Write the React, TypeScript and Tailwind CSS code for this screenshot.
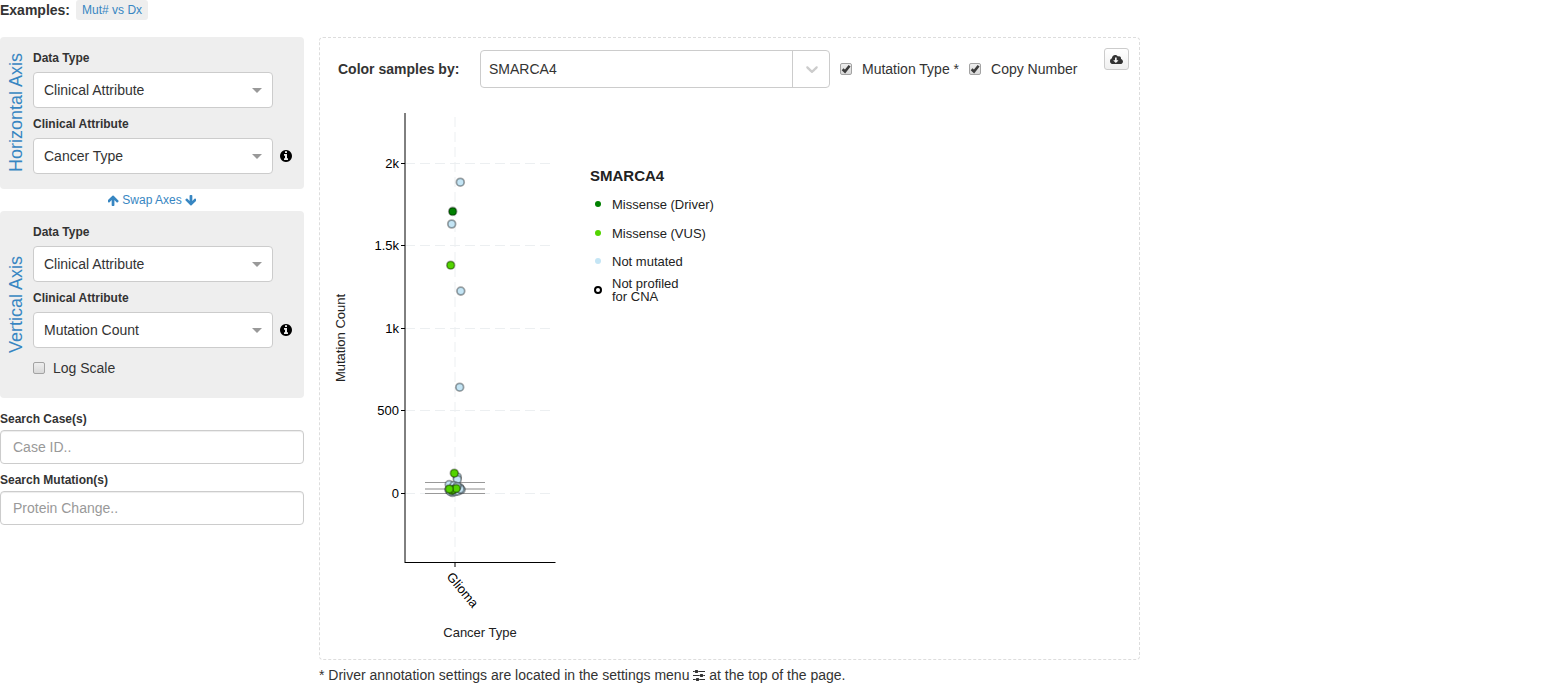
import React, { useState } from "react";
import { FaCloudDownloadAlt } from "react-icons/fa";

type Kind = "driver" | "vus" | "none";
type Point = [number, number, Kind];

const fills: Record<Kind, string> = {
  driver: "#008000",
  vus: "#53D400",
  none: "#c4e5f5",
};

const yTicks = [
  { label: "2k", y: 65 },
  { label: "1.5k", y: 147 },
  { label: "1k", y: 230 },
  { label: "500", y: 312 },
  { label: "0", y: 395 },
];

const points: Point[] = [
  [130.3, 84.2, "none"],
  [121.7, 126, "none"],
  [130.8, 193.1, "none"],
  [129.7, 289.2, "none"],
  [127.3, 379, "none"],
  [127.3, 381.5, "none"],
  [119.2, 386.6, "none"],
  [122.5, 394.5, "none"],
  [119, 392, "none"],
  [120.5, 393.5, "none"],
  [125.5, 393.5, "none"],
  [128, 393, "none"],
  [124, 387.5, "none"],
  [131.2, 391.6, "none"],
  [129.5, 389.5, "none"],
  [130, 391, "none"],
  [127, 388.5, "none"],
  [122.7, 113.4, "driver"],
  [120.7, 167.2, "vus"],
  [124.3, 375.2, "vus"],
  [121.7, 392.5, "vus"],
  [123.5, 391.5, "vus"],
  [126.3, 390.4, "vus"],
  [119.3, 391, "vus"],
];

const legend: { lines: string[]; y: number; kind?: Kind }[] = [
  { lines: ["Missense (Driver)"], y: 106, kind: "driver" },
  { lines: ["Missense (VUS)"], y: 135, kind: "vus" },
  { lines: ["Not mutated"], y: 163, kind: "none" },
  { lines: ["Not profiled", "for CNA"], y: 192 },
];

function ArrowIcon({ down = false }: { down?: boolean }) {
  return (
    <svg viewBox="128 128 1536 1536" className={down ? "size-[11px] rotate-180" : "size-[11px]"} fill="currentColor" aria-hidden="true">
      <path d="M1611 971q0 51-37 90l-75 75q-38 38-91 38-54 0-90-38l-294-293v704q0 52-37.5 84.5t-90.5 32.5h-128q-53 0-90.5-32.5t-37.5-84.5v-704l-294 293q-36 38-90 38t-90-38l-75-75q-38-38-38-90 0-53 38-91l651-651q35-37 90-37 54 0 91 37l651 651q37 39 37 91z" />
    </svg>
  );
}

function InfoIcon() {
  return (
    <svg viewBox="128 128 1536 1536" className="size-3" fill="#000000" aria-hidden="true">
      <path d="M1152 1376v-160q0-14-9-23t-23-9h-96v-512q0-14-9-23t-23-9h-320q-14 0-23 9t-9 23v160q0 14 9 23t23 9h96v320h-96q-14 0-23 9t-9 23v160q0 14 9 23t23 9h448q14 0 23-9t9-23zm-128-896v-160q0-14-9-23t-23-9h-192q-14 0-23 9t-9 23v160q0 14 9 23t23 9h192q14 0 23-9t9-23zm640 416q0 209-103 385.5t-279.5 279.5-385.5 103-385.5-103-279.5-279.5-103-385.5 103-385.5 279.5-279.5 385.5-103 385.5 103 279.5 279.5 103 385.5z" />
    </svg>
  );
}

function SlidersIcon() {
  return (
    <svg viewBox="128 128 1536 1536" className="inline-block size-3 align-[-1px]" fill="currentColor" aria-hidden="true">
      <path d="M480 1408v128h-352v-128h352zm352-128q26 0 45 19t19 45v256q0 26-19 45t-45 19h-256q-26 0-45-19t-19-45v-256q0-26 19-45t45-19h256zm160-384v128h-864v-128h864zm-640-512v128h-224v-128h224zm1312 1024v128h-736v-128h736zm-960-1152q26 0 45 19t19 45v256q0 26-19 45t-45 19h-256q-26 0-45-19t-19-45v-256q0-26 19-45t45-19h256zm640 512q26 0 45 19t19 45v256q0 26-19 45t-45 19h-256q-26 0-45-19t-19-45v-256q0-26 19-45t45-19h256zm320 128v128h-224v-128h224zm0-512v128h-864v-128h864z" />
    </svg>
  );
}

function Checkbox({ id, label, gap, defaultChecked = false }: { id: string; label: string; gap: string; defaultChecked?: boolean }) {
  const [checked, setChecked] = useState(defaultChecked);
  return (
    <div className={"flex items-center " + gap}>
      <span className="grid shrink-0">
        <input
          id={id}
          type="checkbox"
          checked={checked}
          onChange={(e) => setChecked(e.target.checked)}
          className="col-start-1 row-start-1 size-3 appearance-none rounded-xs border border-[#a3a3a3] bg-linear-to-b from-[#eeeeee] to-[#d9d9d9]"
        />
        {checked && (
          <svg viewBox="0 0 12 12" className="pointer-events-none col-start-1 row-start-1 size-3" aria-hidden="true">
            <path d="M2.6 6.2 5 8.5 9.6 2.8" fill="none" stroke="#3c3c3c" strokeWidth="2.6" />
          </svg>
        )}
      </span>
      <label htmlFor={id}>{label}</label>
    </div>
  );
}

function AxisSelect({ id, label, value, options, info }: { id: string; label: string; value: string; options: string[]; info?: boolean }) {
  return (
    <div>
      <label htmlFor={id} className="mb-[5px] block text-xs leading-[18px] font-bold">
        {label}
      </label>
      <div className="flex items-center gap-[7px]">
        <div className="grid w-60 items-center">
          <select
            id={id}
            defaultValue={value}
            className="col-start-1 row-start-1 h-9 w-full appearance-none rounded border border-[#cccccc] bg-white pr-8 pl-[10px]"
          >
            {options.map((o) => (
              <option key={o}>{o}</option>
            ))}
          </select>
          <svg viewBox="0 0 10 5" className="pointer-events-none col-start-1 row-start-1 mr-[11px] h-[5px] w-[10px] justify-self-end" aria-hidden="true">
            <path d="M0 0h10L5 5z" fill="#999999" />
          </svg>
        </div>
        {info && <InfoIcon />}
      </div>
    </div>
  );
}

function AxisPanel({ title, children }: { title: string; children: React.ReactNode }) {
  return (
    <section className="flex rounded bg-[#eeeeee]">
      <div className="flex w-[33px] items-center justify-center pr-[2px]">
        <h2 className="rotate-180 text-lg leading-5 whitespace-nowrap text-[#3786c2] [writing-mode:vertical-rl]">{title}</h2>
      </div>
      <div className="flex flex-col gap-[7px] pt-3 pb-[15px]">{children}</div>
    </section>
  );
}

function SearchField({ id, label, placeholder }: { id: string; label: string; placeholder: string }) {
  return (
    <div>
      <label htmlFor={id} className="mb-[2px] block text-xs leading-[18px] font-bold">
        {label}
      </label>
      <input
        id={id}
        type="text"
        placeholder={placeholder}
        className="h-[34px] w-full rounded border border-[#cccccc] bg-white px-3 shadow-[inset_0_1px_1px_rgba(0,0,0,0.075)] placeholder:text-[#999999]"
      />
    </div>
  );
}

function ScatterPlot() {
  return (
    <svg
      width="480"
      height="550"
      viewBox="0 0 480 550"
      className="mt-[10px] ml-[10px] block"
      fontFamily='"Liberation Sans", Arial, sans-serif'
      fontSize="13"
      role="img"
      aria-label="Mutation Count by Cancer Type"
    >
      <g stroke="#eceff1" strokeDasharray="10 5">
        {yTicks.map((t) => (
          <line key={t.label} x1="75" x2="225" y1={t.y + 0.5} y2={t.y + 0.5} />
        ))}
        <line x1="125" x2="125" y1="464" y2="14" />
      </g>
      <g stroke="#000000">
        <line x1="75" x2="75" y1="15" y2="465" />
        <line x1="75" x2="225.5" y1="464.5" y2="464.5" />
        <line x1="125" x2="125" y1="465" y2="469" />
        {yTicks.map((t) => (
          <line key={t.label} x1="71" x2="75" y1={t.y + 0.5} y2={t.y + 0.5} />
        ))}
      </g>
      <g textAnchor="end">
        {yTicks.map((t) => (
          <text key={t.label} x="69" y={t.y + 5}>
            {t.label}
          </text>
        ))}
      </g>
      <text transform="translate(116 479) rotate(50)">Glioma</text>
      <g fill="#222222" textAnchor="middle">
        <text x="150" y="539">Cancer Type</text>
        <text transform="translate(15 240) rotate(-90)">Mutation Count</text>
      </g>
      <g>
        <rect x="95" y="384" width="60" height="1" fill="#999999" />
        <rect x="95" y="390" width="60" height="2" fill="#c4c4c4" />
        <rect x="95" y="395" width="60" height="1" fill="#999999" />
      </g>
      <g stroke="#000000" strokeOpacity="0.35" strokeWidth="1.8">
        {points.map(([x, y, kind], i) => (
          <circle key={i} cx={x} cy={y} r="3.9" fill={fills[kind]} />
        ))}
      </g>
      <g fill="#222222">
        <text x="260" y="83" fontSize="15" fontWeight="bold">
          SMARCA4
        </text>
        {legend.map((item) => (
          <g key={item.lines[0]}>
            <circle
              cx="268"
              cy={item.y}
              r="3"
              fill={item.kind ? fills[item.kind] : "#ffffff"}
              stroke={item.kind ? "none" : "#000000"}
              strokeWidth="2"
            />
            {item.lines.map((line, i) => (
              <text key={line} x="282" y={item.y + (item.lines.length > 1 ? -2 : 5) + i * 13}>
                {line}
              </text>
            ))}
          </g>
        ))}
      </g>
    </svg>
  );
}

export default function App() {
  return (
    <div className="bg-white font-['Liberation_Sans',Arial,sans-serif] text-sm leading-5 text-[#333333]">
      <header className="flex items-center gap-[6px]">
        <strong>Examples:</strong>
        <button type="button" className="h-5 rounded-[3px] bg-[#eeeeee] px-[6px] text-xs leading-5 text-[#3786c2]">
          Mut# vs Dx
        </button>
      </header>

      <div className="mt-[17px] flex items-start gap-[15px]">
        <aside className="w-[304px] shrink-0">
          <AxisPanel title="Horizontal Axis">
            <AxisSelect id="h-type" label="Data Type" value="Clinical Attribute" options={["Clinical Attribute"]} />
            <AxisSelect id="h-attr" label="Clinical Attribute" value="Cancer Type" options={["Cancer Type", "Mutation Count"]} info />
          </AxisPanel>
          <div className="flex h-[22px] items-center justify-center">
            <button type="button" className="flex items-center gap-[3px] text-xs text-[#3786c2]">
              <ArrowIcon />
              Swap Axes
              <ArrowIcon down />
            </button>
          </div>
          <AxisPanel title="Vertical Axis">
            <AxisSelect id="v-type" label="Data Type" value="Clinical Attribute" options={["Clinical Attribute"]} />
            <AxisSelect id="v-attr" label="Clinical Attribute" value="Mutation Count" options={["Mutation Count", "Cancer Type"]} info />
            <div className="pt-[3px] pb-[5px]">
              <Checkbox id="log" label="Log Scale" gap="gap-2" />
            </div>
          </AxisPanel>
          <div className="mt-3 flex flex-col gap-[7px]">
            <SearchField id="case" label="Search Case(s)" placeholder="Case ID.." />
            <SearchField id="mutation" label="Search Mutation(s)" placeholder="Protein Change.." />
          </div>
        </aside>

        <main className="max-w-[821px] min-w-0 flex-1">
          <div className="relative rounded border border-dashed border-[#dddddd] pt-3 pb-[11px]">
            <div className="flex items-center pl-[18px]">
              <label htmlFor="color-by" className="w-[142px] font-bold">
                Color samples by:
              </label>
              <div className="grid w-[350px] items-stretch">
                <select
                  id="color-by"
                  defaultValue="SMARCA4"
                  className="col-start-1 row-start-1 h-[38px] appearance-none rounded border border-[#cccccc] bg-white pr-10 pl-2"
                >
                  <option>SMARCA4</option>
                </select>
                <span className="pointer-events-none col-start-1 row-start-1 my-px flex w-[38px] items-center justify-center justify-self-end border-l border-[#cccccc]">
                  <svg viewBox="0 0 20 20" className="size-5" fill="#cccccc" aria-hidden="true">
                    <path d="M4.516 7.548c0.436-0.446 1.043-0.481 1.576 0l3.908 3.747 3.908-3.747c0.533-0.481 1.141-0.446 1.574 0 0.436 0.445 0.408 1.197 0 1.615-0.406 0.418-4.695 4.502-4.695 4.502-0.217 0.223-0.502 0.335-0.787 0.335s-0.57-0.112-0.789-0.335c0 0-4.287-4.084-4.695-4.502s-0.436-1.17 0-1.615z" />
                  </svg>
                </span>
              </div>
              <div className="ml-[10px] flex gap-[10px]">
                <Checkbox id="mut-type" label="Mutation Type *" gap="gap-[10px]" defaultChecked />
                <Checkbox id="copy-num" label="Copy Number" gap="gap-[10px]" defaultChecked />
              </div>
            </div>
            <button
              type="button"
              aria-label="Download"
              className="absolute top-[10px] right-[10px] flex h-[22px] w-[25px] items-center justify-center rounded-[3px] border border-[#cccccc] bg-linear-to-b from-white to-[#f0f0f0]"
            >
              <FaCloudDownloadAlt className="size-[13px]" />
            </button>
            <ScatterPlot />
          </div>
          <p className="pt-[5px]">
            * Driver annotation settings are located in the settings menu <SlidersIcon /> at the top of the page.
          </p>
        </main>
      </div>
    </div>
  );
}
